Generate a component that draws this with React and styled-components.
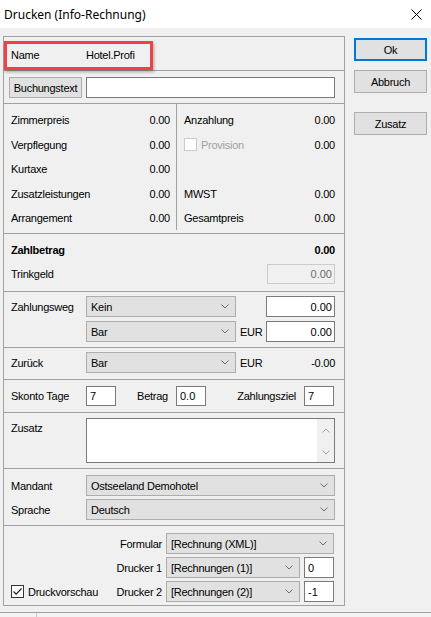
import React from 'react'
import styled, { createGlobalStyle } from 'styled-components'

const Chevron = ({ up }) => (
  <svg width="8" height="5" viewBox="0 0 8 5">
    <path
      d={up ? 'M0.5 4.5 L4 1 L7.5 4.5' : 'M0.5 0.5 L4 4 L7.5 0.5'}
      fill="none"
      stroke="currentColor"
      strokeWidth="1"
    />
  </svg>
)

const Select = ({ children }) => (
  <SelectBox>
    <span>{children}</span>
    <Chevron />
  </SelectBox>
)

const Check = ({ checked, disabled }) => (
  <CheckBox $disabled={disabled}>
    {checked && (
      <svg width="11" height="11" viewBox="0 0 11 11">
        <path d="M1.5 5.5 L4.2 8.2 L9.5 2.5" fill="none" stroke="#222" strokeWidth="1.2" />
      </svg>
    )}
  </CheckBox>
)

const App = () => {
  return (
    <Window>
      <GlobalStyle />
      <TitleBar>
        <Title>Drucken (Info-Rechnung)</Title>
        <svg width="11" height="11" viewBox="0 0 11 11">
          <path d="M0.5 0.5 L10.5 10.5 M10.5 0.5 L0.5 10.5" stroke="#000" strokeWidth="1" />
        </svg>
      </TitleBar>

      <Body>
        <Panel>
          <NameSection $h={33}>
            <Highlight />
            <Label>Name</Label>
            <span>Hotel.Profi</span>
          </NameSection>

          <Section $h={33} $pt={6} $pl={5}>
            <InlineRow>
              <SmallButton>Buchungstext</SmallButton>
              <Field $left />
            </InlineRow>
          </Section>

          <PriceSection $h={130}>
            <PriceCol $first>
              <PriceRow><span>Zimmerpreis</span><span>0.00</span></PriceRow>
              <PriceRow><span>Verpflegung</span><span>0.00</span></PriceRow>
              <PriceRow><span>Kurtaxe</span><span>0.00</span></PriceRow>
              <PriceRow><span>Zusatzleistungen</span><span>0.00</span></PriceRow>
              <PriceRow><span>Arrangement</span><span>0.00</span></PriceRow>
            </PriceCol>
            <PriceCol>
              <PriceRow><span>Anzahlung</span><span>0.00</span></PriceRow>
              <PriceRow>
                <CheckLabel $disabled>
                  <Check disabled />
                  Provision
                </CheckLabel>
                <span>0.00</span>
              </PriceRow>
              <PriceRow />
              <PriceRow><span>MWST</span><span>0.00</span></PriceRow>
              <PriceRow><span>Gesamtpreis</span><span>0.00</span></PriceRow>
            </PriceCol>
          </PriceSection>

          <Section $h={58} $pt={4}>
            <TotalRow $bold><span>Zahlbetrag</span><span>0.00</span></TotalRow>
            <TotalRow>
              <span>Trinkgeld</span>
              <TipField disabled defaultValue="0.00" $h={20} />
            </TotalRow>
          </Section>

          <Section $h={56} $pt={4}>
            <PayGrid>
              <span>Zahlungsweg</span>
              <Select>Kein</Select>
              <span />
              <Field readOnly defaultValue="0.00" />
              <span />
              <Select>Bar</Select>
              <Currency>EUR</Currency>
              <Field readOnly defaultValue="0.00" />
            </PayGrid>
          </Section>

          <Section $h={32} $pt={4}>
            <PayGrid>
              <span>Zurück</span>
              <Select>Bar</Select>
              <Currency>EUR</Currency>
              <Amount>-0.00</Amount>
            </PayGrid>
          </Section>

          <Section $h={33} $pt={6}>
            <DiscountGrid>
              <span>Skonto Tage</span>
              <Field readOnly defaultValue="7" $left $h={20} />
              <SideLabel>Betrag</SideLabel>
              <Field readOnly defaultValue="0.0" $left $h={20} />
              <SideLabel>Zahlungsziel</SideLabel>
              <Field readOnly defaultValue="7" $left $h={20} />
            </DiscountGrid>
          </Section>

          <Section $h={56} $pt={5}>
            <FormGrid>
              <TopLabel>Zusatz</TopLabel>
              <Memo>
                <MemoText />
                <ScrollBar>
                  <Chevron up />
                  <Chevron />
                </ScrollBar>
              </Memo>
            </FormGrid>
          </Section>

          <Section $h={57} $pt={6}>
            <FormGrid>
              <span>Mandant</span>
              <Select>Ostseeland Demohotel</Select>
              <span>Sprache</span>
              <Select>Deutsch</Select>
            </FormGrid>
          </Section>

          <Section $h={80} $pt={7}>
            <PrintGrid>
              <RightLabel>Formular</RightLabel>
              <WideCell><Select>[Rechnung (XML)]</Select></WideCell>
              <RightLabel>Drucker 1</RightLabel>
              <Select>[Rechnungen (1)]</Select>
              <Field readOnly defaultValue="0" $left />
              <PreviewCell>
                <CheckLabel>
                  <Check checked />
                  Druckvorschau
                </CheckLabel>
                <span>Drucker 2</span>
              </PreviewCell>
              <Select>[Rechnungen (2)]</Select>
              <Field readOnly defaultValue="-1" $left />
            </PrintGrid>
          </Section>
        </Panel>

        <Actions>
          <DialogButton $default>Ok</DialogButton>
          <DialogButton>Abbruch</DialogButton>
          <DialogButton $gap={19}>Zusatz</DialogButton>
        </Actions>
      </Body>

      <StatusBar>
        <StatusPane />
      </StatusBar>
    </Window>
  )
}

export default App

const GlobalStyle = createGlobalStyle`
  html, body {
    margin: 0;
    padding: 0;
    background: #f0f0f0;
  }
  body {
    font-family: "Liberation Sans", Arial, sans-serif;
    font-size: 11px;
    letter-spacing: -0.25px;
    color: #000;
  }
  * {
    box-sizing: border-box;
  }
`;

const Window = styled.div`
  width: 431px;
  height: 617px;
  display: flex;
  flex-direction: column;
  overflow: hidden;
  background: #f0f0f0;
`;

const TitleBar = styled.div`
  height: 28px;
  background: #fff;
  display: flex;
  align-items: center;
  justify-content: space-between;
  padding: 0 9px 0 4px;
`;

const Title = styled.span`
  font-family: "Noto Sans", "Open Sans", sans-serif;
  font-size: 12px;
  letter-spacing: 0;
`;

const Body = styled.div`
  display: flex;
  padding: 8px 0 0 3px;
  gap: 9px;
`;

const Panel = styled.div`
  width: 342px;
  border: 1px solid #a0a0a0;
  display: flex;
  flex-direction: column;

  & > div + div {
    border-top: 1px solid #a0a0a0;
  }
`;

const Section = styled.div`
  height: ${p => p.$h}px;
  padding: ${p => p.$pt || 0}px 9px 0 ${p => p.$pl || 7}px;
`;

const NameSection = styled(Section)`
  position: relative;
  display: flex;
  align-items: center;
  padding-top: 2px;
`;

const Highlight = styled.div`
  position: absolute;
  top: 4px;
  left: 0;
  width: 149px;
  height: 29px;
  border: 3px solid #ef4248;
  box-shadow: 1px 2px 3px rgba(0, 0, 0, 0.3);
  pointer-events: none;
`;

const Label = styled.span`
  width: 75px;
  flex-shrink: 0;
`;

const InlineRow = styled.div`
  display: flex;
  gap: 4px;
`;

const SmallButton = styled.button`
  width: 73px;
  height: 21px;
  flex-shrink: 0;
  padding: 0;
  font: inherit;
  letter-spacing: -0.25px;
  color: #000;
  background: #e1e1e1;
  border: 1px solid #adadad;
`;

const Field = styled.input`
  display: block;
  width: 100%;
  height: ${p => p.$h || 21}px;
  padding: 0 ${p => (p.$left ? 0 : 2)}px 0 ${p => (p.$left ? 3 : 0)}px;
  font: inherit;
  color: #000;
  text-align: ${p => (p.$left ? 'left' : 'right')};
  background: #fff;
  border: 1px solid #7a7a7a;
  border-radius: 0;
  outline: none;
`;

const TipField = styled(Field)`
  width: 68px;
  &:disabled {
    background: #f0f0f0;
    border-color: #cccccc;
    color: #6d6d6d;
  }
`;

const PriceSection = styled(Section)`
  display: flex;
  padding: 0;
`;

const PriceCol = styled.div`
  width: ${p => (p.$first ? '173px' : 'auto')};
  flex: ${p => (p.$first ? 'none' : 1)};
  height: 126px;
  padding: 4px ${p => (p.$first ? 6 : 9)}px 0 7px;
  border-right: ${p => (p.$first ? '1px solid #a0a0a0' : 'none')};
`;

const PriceRow = styled.div`
  height: 24.5px;
  display: flex;
  align-items: center;
  justify-content: space-between;
`;

const CheckLabel = styled.label`
  display: flex;
  align-items: center;
  gap: 4px;
  color: ${p => (p.$disabled ? '#a0a0a0' : '#000')};
`;

const CheckBox = styled.span`
  width: 13px;
  height: 13px;
  display: flex;
  align-items: center;
  justify-content: center;
  background: #fff;
  border: 1px solid ${p => (p.$disabled ? '#cccccc' : '#333')};
`;

const TotalRow = styled.div`
  height: 24px;
  display: flex;
  align-items: center;
  justify-content: space-between;
  font-weight: ${p => (p.$bold ? 'bold' : 'normal')};
`;

const PayGrid = styled.div`
  display: grid;
  grid-template-columns: 75px 150px 30px 1fr;
  grid-auto-rows: 21px;
  row-gap: 4px;
  align-items: center;
`;

const Currency = styled.span`
  padding-left: 4px;
`;

const Amount = styled.span`
  text-align: right;
`;

const SelectBox = styled.div`
  height: 21px;
  display: flex;
  align-items: center;
  justify-content: space-between;
  padding: 0 6px 0 4px;
  background: #e1e1e1;
  border: 1px solid #adadad;

  svg {
    color: #6e6e6e;
    flex-shrink: 0;
  }
`;

const DiscountGrid = styled.div`
  display: grid;
  grid-template-columns: 75px 30px 60px 30px 98px 30px;
  align-items: center;
`;

const SideLabel = styled.span`
  text-align: right;
  padding-right: 8px;
`;

const FormGrid = styled.div`
  display: grid;
  grid-template-columns: 75px 1fr;
  grid-auto-rows: 21px;
  row-gap: 3px;
  align-items: center;
`;

const TopLabel = styled.span`
  align-self: start;
  line-height: 21px;
`;

const Memo = styled.div`
  height: 45px;
  align-self: start;
  display: flex;
  background: #fff;
  border: 1px solid #7a7a7a;
`;

const MemoText = styled.div`
  flex: 1;
`;

const ScrollBar = styled.div`
  width: 17px;
  display: flex;
  flex-direction: column;
  align-items: center;
  justify-content: space-between;
  padding: 9px 0 7px;
  background: #f0f0f0;
  color: #a3a3a3;
`;

const PrintGrid = styled.div`
  display: grid;
  grid-template-columns: 151px 134px 30px;
  grid-auto-rows: 21px;
  column-gap: 4px;
  row-gap: 3px;
  align-items: center;
`;

const RightLabel = styled.span`
  text-align: right;
`;

const WideCell = styled.div`
  grid-column: 2 / 4;
`;

const PreviewCell = styled.div`
  display: flex;
  align-items: center;
  justify-content: space-between;
`;

const Actions = styled.div`
  width: 73px;
  padding-top: 2px;
  display: flex;
  flex-direction: column;
`;

const DialogButton = styled.button`
  height: 23px;
  margin-top: ${p => (p.$gap !== undefined ? p.$gap : 9)}px;
  padding: 0;
  font: inherit;
  letter-spacing: -0.25px;
  color: #000;
  background: #e1e1e1;
  border: ${p => (p.$default ? '2px solid #0078d7' : '1px solid #adadad')};

  &:first-child {
    margin-top: 0;
  }
`;

const StatusBar = styled.div`
  margin-top: auto;
  height: 5px;
  display: flex;
  border-top: 1px solid #a0a0a0;
  background: #f3f3f3;
`;

const StatusPane = styled.div`
  width: 37px;
  border-right: 1px solid #c8c8c8;
`;
